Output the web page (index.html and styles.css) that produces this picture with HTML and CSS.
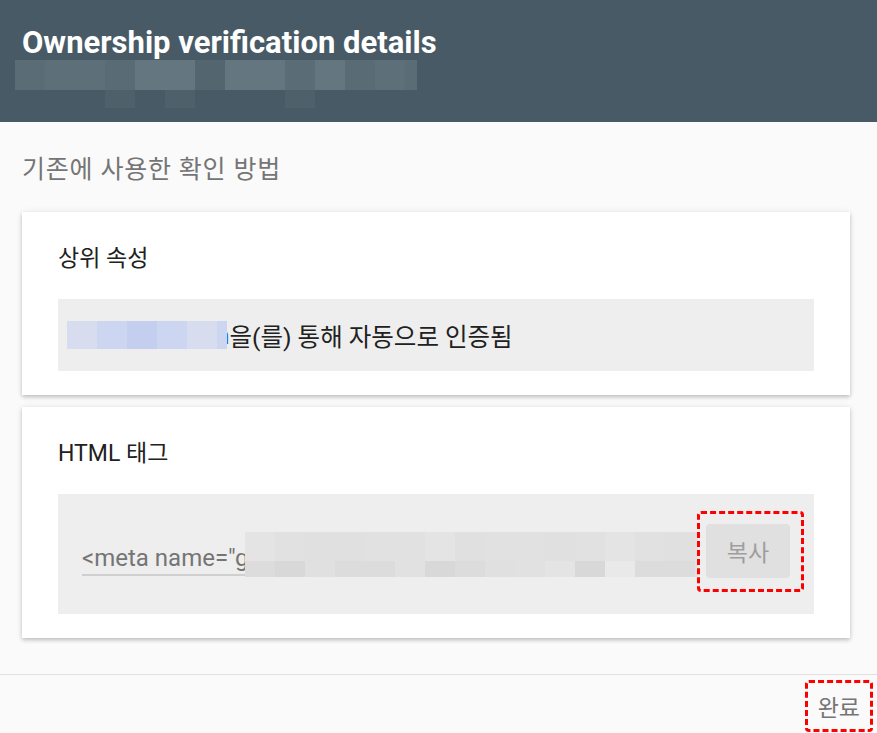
FILE: index.html
```html
<!DOCTYPE html>
<html lang="ko">
<head>
    <meta charset="UTF-8">
    <meta name="viewport" content="width=device-width, initial-scale=1.0">
    <link rel="stylesheet" href="styles.css">
    <title>Ownership verification details</title>
</head>
<body>
    <div class="header">
        <h1 class="header-title">Ownership verification details</h1>
        <div class="blur-row">
            <span class="px p1"></span><span class="px p2"></span><span class="px p2"></span><span class="px p3"></span><span class="px p4"></span><span class="px p4"></span><span class="px p5"></span><span class="px p4"></span><span class="px p4"></span><span class="px p1"></span><span class="px p4"></span><span class="px p3"></span><span class="px p2"></span><span class="px p1 px-short"></span>
        </div>
        <div class="blur-row blur-row-low">
            <span class="px px-gap3"></span><span class="px p6"></span><span class="px px-gap1"></span><span class="px p6"></span><span class="px px-gap3"></span><span class="px p6"></span>
        </div>
    </div>

    <div class="content">
        <div class="subtitle">기존에 사용한 확인 방법</div>

        <div class="card">
            <div class="card-title">상위 속성</div>
            <div class="card-box box-parent">
                <span class="domain-blur"><span class="db d1"></span><span class="db d2"></span><span class="db d3"></span><span class="db d2"></span><span class="db d1"></span><span class="db d2 db-short"></span></span><span class="domain-tail">n</span><span>을(를) 통해 자동으로 인증됨</span>
            </div>
        </div>

        <div class="card">
            <div class="card-title">HTML 태그</div>
            <div class="card-box box-tag">
                <div class="tag-input">
                    <span class="tag-text">&lt;meta name="g</span>
                    <div class="tag-blur">
                        <div class="tb-row">
                            <span class="tb t1"></span><span class="tb t2"></span><span class="tb t3"></span><span class="tb t3"></span><span class="tb t2"></span><span class="tb t2"></span><span class="tb t1"></span><span class="tb t3"></span><span class="tb t2"></span><span class="tb t2"></span><span class="tb t3"></span><span class="tb t2"></span><span class="tb t1"></span><span class="tb t2"></span><span class="tb t3"></span>
                        </div>
                        <div class="tb-row tb-row-low">
                            <span class="tb t4"></span><span class="tb t5"></span><span class="tb t3"></span><span class="tb t4"></span><span class="tb t4"></span><span class="tb t2"></span><span class="tb t5"></span><span class="tb t4"></span><span class="tb t3"></span><span class="tb t2"></span><span class="tb t1"></span><span class="tb t5"></span><span class="tb t6"></span><span class="tb t4"></span><span class="tb t4"></span>
                        </div>
                    </div>
                </div>
                <button class="copy-btn marked">복사</button>
            </div>
        </div>
    </div>

    <div class="footer">
        <button class="done-btn">완료</button>
    </div>
</body>
</html>
```

FILE: styles.css
```css
* {
    box-sizing: border-box;
}

body {
    margin: 0;
    background-color: #fafafa;
    font-family: Roboto, "Noto Sans CJK KR", sans-serif;
    color: #212121;
}

.header {
    height: 122px;
    background-color: #475a65;
    padding: 25px 0 0 22px;
}

.header-title {
    margin: 0;
    font-size: 31px;
    line-height: 36px;
    font-weight: 700;
    color: #ffffff;
}

.blur-row {
    display: flex;
    margin-left: -7px;
    margin-top: -1px;
    height: 30px;
}

.blur-row-low {
    margin-top: 0;
    height: 18px;
}

.px {
    width: 30px;
    flex: none;
}

.px-short { width: 12px; }
.px-gap1 { width: 30px; }
.px-gap3 { width: 90px; }
.p1 { background-color: #5a6d77; }
.p2 { background-color: #5d707a; }
.p3 { background-color: #596c76; }
.p4 { background-color: #64767f; }
.p5 { background-color: #53656f; }
.p6 { background-color: #4e616b; }

.content {
    padding: 0 27px 36px 22px;
}

.subtitle {
    padding: 31px 0 25px;
    font-size: 25px;
    line-height: 34px;
    color: #757575;
    letter-spacing: 0.8px;
}

.card {
    background-color: #ffffff;
    box-shadow: 0 2px 4px rgba(0, 0, 0, 0.22), 0 0 8px rgba(0, 0, 0, 0.06);
    padding: 31px 36px 24px;
    margin-bottom: 12px;
}

.card:last-child {
    margin-bottom: 0;
}

.card-title {
    font-size: 23px;
    line-height: 32px;
    margin-bottom: 24px;
}

.card-box {
    background-color: #eeeeee;
}

.box-parent {
    height: 72px;
    display: flex;
    align-items: center;
    padding: 0 9px;
    font-size: 24.5px;
}

.domain-blur {
    position: relative;
    z-index: 1;
    display: flex;
    height: 28px;
}

.db {
    width: 30px;
    flex: none;
}

.db-short { width: 10px; }
.d1 { background-color: #d7ddee; }
.d2 { background-color: #cdd6f0; }
.d3 { background-color: #c4cfef; }

.domain-tail {
    color: #1a73e8;
    margin-left: -11px;
}

.box-tag {
    height: 120px;
    display: flex;
    align-items: center;
    padding: 0 24px;
    gap: 8px;
}

.tag-input {
    position: relative;
    flex: 1;
    height: 44px;
    border-bottom: 2px solid #cfcfcf;
    display: flex;
    align-items: flex-end;
    padding-bottom: 2px;
}

.tag-text {
    font-size: 24px;
    line-height: 28px;
    color: #757575;
    white-space: nowrap;
}

.tag-blur {
    position: absolute;
    left: 163px;
    right: 0;
    top: 0;
    bottom: -3px;
    display: flex;
    flex-direction: column;
    overflow: hidden;
    background-color: #e2e2e2;
}

.tb-row {
    display: flex;
    height: 30px;
}

.tb-row-low {
    height: 17px;
}

.tb {
    width: 30px;
    flex: none;
}

.t1 { background-color: #e4e4e4; }
.t2 { background-color: #e1e1e1; }
.t3 { background-color: #e0e0e0; }
.t4 { background-color: #dcdcdc; }
.t5 { background-color: #d8d8d8; }
.t6 { background-color: #e9e9e9; }

.copy-btn {
    position: relative;
    flex: none;
    width: 84px;
    height: 54px;
    border: none;
    border-radius: 4px;
    background-color: #e0e0e0;
    color: #9e9e9e;
    font-family: inherit;
    font-size: 23px;
    margin-top: -6px;
}

/* red dashed annotation box */
.marked::after {
    content: "";
    position: absolute;
    top: -13px;
    left: -9px;
    right: -14px;
    bottom: -14px;
    border: 3px dashed #ff0000;
    border-radius: 4px;
}

.footer {
    border-top: 1px solid #e0e0e0;
    display: flex;
    justify-content: flex-end;
    padding: 5px 4px 1px 0;
}

.done-btn {
    height: 52px;
    padding: 0 10px 0 10px;
    border: 3px dashed #ff0000;
    border-radius: 4px;
    background: none;
    color: #757575;
    font-family: inherit;
    font-size: 23px;
}
```
